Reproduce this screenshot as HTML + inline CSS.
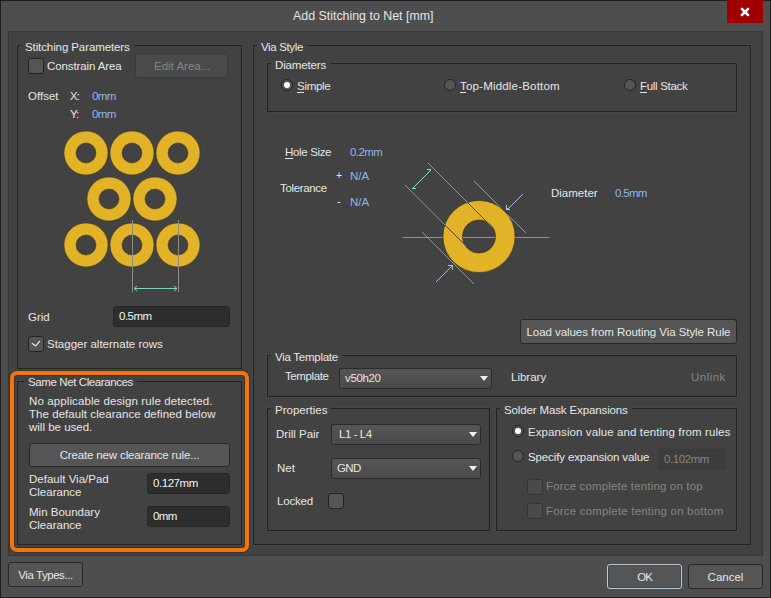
<!DOCTYPE html>
<html><head><meta charset="utf-8">
<style>
*{box-sizing:border-box;margin:0;padding:0}
html,body{width:771px;height:598px;overflow:hidden;background:#1e1e1e}
body{position:relative;font-family:"Liberation Sans",sans-serif;font-size:11.5px;color:#e6e6e6}
.win{position:absolute;left:0;top:0;width:771px;height:598px;background:#4e4e4e;border:1px solid #1e1e1e}
.panel{position:absolute;left:8px;top:31px;width:755px;height:525px;background:#424242;border:1px solid #363636}
.t{position:absolute;white-space:nowrap;line-height:14px;height:14px}
.v{color:#8db6e8}
.dis{color:#858585}
.grp{position:absolute;border:1px solid #222;box-shadow:0 0 0 1px rgba(255,255,255,0.03)}
.gt{position:absolute;white-space:nowrap;line-height:14px;height:14px;background:#424242;padding:0 4px}
.cb{position:absolute;width:16px;height:16px;border:1px solid #222;border-radius:3px;background:#555}
.cb.d{background:#4a4a4a;border-color:#353535}
.rd{position:absolute;width:12px;height:12px;border:1px solid #222;border-radius:50%;background:#555}
.rd.on::after{content:"";position:absolute;left:2px;top:2px;width:6px;height:6px;border-radius:50%;background:#fff}
.btn{position:absolute;border:1px solid #272727;border-radius:3px;background:#555;text-align:center}
.inp{position:absolute;border:1px solid #262626;border-radius:3px;background:#2e2e2e}
.inp.d{background:#3d3d3d;border-color:#3b3b3b}
.dd{position:absolute;border:1px solid #2a2a2a;border-radius:3px;background:linear-gradient(#565656,#4a4a4a)}
.arr{position:absolute;width:0;height:0;border-left:4px solid transparent;border-right:4px solid transparent;border-top:5px solid #f0f0f0}
u{text-decoration:none;border-bottom:1px solid #e6e6e6}
</style></head><body>
<div class="win"></div>
<!-- title -->
<div class="t" style="left:293px;top:9px;font-size:12.4px;color:#e4e4e4">Add Stitching to Net [mm]</div>
<div style="position:absolute;left:727px;top:0px;width:36px;height:23px;background:#a00000"></div>
<svg style="position:absolute;left:727px;top:1px" width="36" height="22" viewBox="0 0 36 22"><path d="M14.9 7.8 L21.1 14 M21.1 7.8 L14.9 14" stroke="#fff" stroke-width="2.5" stroke-linecap="round"/></svg>

<div class="panel"></div>

<!-- Stitching Parameters -->
<div class="grp" style="left:17px;top:45px;width:225px;height:324px"></div>
<div class="gt" style="left:21px;top:40px;letter-spacing:-0.1px">Stitching Parameters</div>
<div class="cb" style="left:28px;top:58px"></div>
<div class="t" style="left:47px;top:59px;letter-spacing:-0.11px">Constrain Area</div>
<div class="btn" style="left:135px;top:53px;width:93px;height:25px;background:#4a4a4a;border-color:#3a3a3a"></div>
<div class="t dis" style="left:154px;top:59px">Edit Area...</div>
<div class="t" style="left:28px;top:89px">Offset</div>
<div class="t" style="left:70px;top:89px;letter-spacing:-1px">X:</div>
<div class="t v" style="left:92px;top:89px;letter-spacing:-0.6px">0mm</div>
<div class="t" style="left:70px;top:107px;letter-spacing:-1px">Y:</div>
<div class="t v" style="left:92px;top:107px;letter-spacing:-0.6px">0mm</div>

<svg style="position:absolute;left:0;top:0" width="260" height="300">
 <g fill="none" stroke="#e2b227" stroke-width="12">
  <circle cx="86" cy="153" r="16"/><circle cx="132" cy="153" r="16"/><circle cx="178" cy="153" r="16"/>
  <circle cx="109" cy="199" r="16"/><circle cx="155" cy="199" r="16"/>
  <circle cx="86" cy="245" r="16"/><circle cx="132" cy="245" r="16"/><circle cx="178" cy="245" r="16"/>
</g>
 <g fill="none" stroke="#3a3020" stroke-opacity="0.5" stroke-width="1">
  <circle cx="86" cy="153" r="22"/><circle cx="132" cy="153" r="22"/><circle cx="178" cy="153" r="22"/>
  <circle cx="109" cy="199" r="22"/><circle cx="155" cy="199" r="22"/>
  <circle cx="86" cy="245" r="22"/><circle cx="132" cy="245" r="22"/><circle cx="178" cy="245" r="22"/>
  <circle cx="86" cy="153" r="10"/><circle cx="132" cy="153" r="10"/><circle cx="178" cy="153" r="10"/>
  <circle cx="109" cy="199" r="10"/><circle cx="155" cy="199" r="10"/>
  <circle cx="86" cy="245" r="10"/><circle cx="132" cy="245" r="10"/><circle cx="178" cy="245" r="10"/>
 </g>
 <g stroke="#8a8a8a" stroke-width="1"><line x1="132.5" y1="220" x2="132.5" y2="292"/><line x1="178.5" y1="220" x2="178.5" y2="292"/></g>
 <g stroke="#7fd4c8" stroke-width="1" fill="none"><line x1="134" y1="288.5" x2="177" y2="288.5"/><path d="M137 286 L134 288.5 L137 291 M174 286 L177 288.5 L174 291"/></g>
</svg>

<div class="t" style="left:28px;top:310px">Grid</div>
<div class="inp" style="left:113px;top:306px;width:117px;height:21px"></div>
<div class="t" style="left:119px;top:309px;letter-spacing:-0.5px;color:#f2f2f2">0.5mm</div>
<div class="cb" style="left:28px;top:336px"></div>
<svg style="position:absolute;left:28px;top:336px" width="16" height="16"><path d="M3.8 7.3 L7.8 9.9 L11.8 5" stroke="#dcdcdc" stroke-width="1.3" fill="none" stroke-linejoin="round"/></svg>
<div class="t" style="left:47px;top:337px">Stagger alternate rows</div>

<!-- Same Net Clearances -->
<div class="grp" style="left:17px;top:381px;width:225px;height:164px"></div>
<div class="gt" style="left:24px;top:375px;letter-spacing:-0.4px">Same Net Clearances</div>
<div class="t" style="left:29px;top:394px;letter-spacing:0.11px">No applicable design rule detected.</div>
<div class="t" style="left:29px;top:407px;letter-spacing:0.05px">The default clearance defined below</div>
<div class="t" style="left:29px;top:420px">will be used.</div>
<div class="btn" style="left:29px;top:443px;width:201px;height:24px"></div>
<div class="t" style="left:29px;top:448px;width:201px;text-align:center;letter-spacing:-0.15px">Create new clearance rule...</div>
<div class="t" style="left:29px;top:472px">Default Via/Pad</div>
<div class="t" style="left:29px;top:485px">Clearance</div>
<div class="inp" style="left:147px;top:473px;width:83px;height:21px"></div>
<div class="t" style="left:153px;top:476px;letter-spacing:-0.45px;color:#f2f2f2">0.127mm</div>
<div class="t" style="left:29px;top:505px">Min Boundary</div>
<div class="t" style="left:29px;top:518px">Clearance</div>
<div class="inp" style="left:147px;top:506px;width:83px;height:21px"></div>
<div class="t" style="left:153px;top:509px;letter-spacing:-0.6px;color:#f2f2f2">0mm</div>
<div style="position:absolute;left:10px;top:371px;width:239px;height:181px;border:4px solid #f4740c;border-radius:7px;box-shadow:0 0 0 1px rgba(70,35,5,0.55),inset 0 0 0 1px rgba(70,35,5,0.55)"></div>

<!-- Via Style -->
<div class="grp" style="left:253px;top:45px;width:498px;height:500px"></div>
<div class="gt" style="left:257px;top:40px;letter-spacing:-0.35px">Via Style</div>
<div class="grp" style="left:267px;top:63px;width:470px;height:49px"></div>
<div class="gt" style="left:271px;top:58px;letter-spacing:-0.14px">Diameters</div>
<div class="rd on" style="left:281px;top:79px"></div>
<div class="t" style="left:297px;top:79px;letter-spacing:-0.3px"><u>S</u>imple</div>
<div class="rd" style="left:444px;top:79px"></div>
<div class="t" style="left:460px;top:79px;letter-spacing:0.19px"><u>T</u>op-Middle-Bottom</div>
<div class="rd" style="left:624px;top:79px"></div>
<div class="t" style="left:640px;top:79px;letter-spacing:-0.31px"><u>F</u>ull Stack</div>

<div class="t" style="left:285px;top:145px;letter-spacing:-0.34px"><u>H</u>ole Size</div>
<div class="t v" style="left:350px;top:145px;letter-spacing:-0.57px">0.2mm</div>
<div class="t" style="left:336px;top:168px;font-size:10.5px">+</div>
<div class="t v" style="left:350px;top:169px">N/A</div>
<div class="t" style="left:280px;top:181px;letter-spacing:-0.34px">Tolerance</div>
<div class="t" style="left:337px;top:194px">-</div>
<div class="t v" style="left:350px;top:195px">N/A</div>
<div class="t" style="left:551px;top:186px">Diameter</div>
<div class="t v" style="left:615px;top:186px;letter-spacing:-0.7px">0.5mm</div>

<svg style="position:absolute;left:0;top:0" width="771" height="300" shape-rendering="crispEdges">
 <defs><mask id="rm" maskUnits="userSpaceOnUse" x="0" y="0" width="771" height="300"><circle cx="479" cy="236.5" r="36" fill="#fff"/><circle cx="479" cy="236.5" r="16.5" fill="#000"/></mask></defs>
 <rect x="403" y="237" width="146" height="1" fill="#909090"/>
 <path fill="#949494" d="M405 185h1v1h-1zM406 186h1v1h-1zM407 187h1v1h-1zM408 188h1v1h-1zM409 189h1v1h-1zM410 190h1v1h-1zM411 191h1v1h-1zM412 192h1v1h-1zM413 193h1v1h-1zM414 194h1v1h-1zM415 195h1v1h-1zM416 196h1v1h-1zM417 197h1v1h-1zM418 198h1v1h-1zM419 199h1v1h-1zM420 200h1v1h-1zM421 201h1v1h-1zM422 202h1v1h-1zM422 232h1v1h-1zM423 203h1v1h-1zM423 233h1v1h-1zM424 204h1v1h-1zM424 234h1v1h-1zM425 205h1v1h-1zM425 235h1v1h-1zM426 206h1v1h-1zM426 236h1v1h-1zM427 207h1v1h-1zM427 237h1v1h-1zM428 163h1v1h-1zM428 208h1v1h-1zM428 238h1v1h-1zM429 164h1v1h-1zM429 209h1v1h-1zM429 239h1v1h-1zM430 165h1v1h-1zM430 210h1v1h-1zM430 240h1v1h-1zM431 166h1v1h-1zM431 211h1v1h-1zM431 241h1v1h-1zM432 167h1v1h-1zM432 212h1v1h-1zM432 242h1v1h-1zM433 168h1v1h-1zM433 213h1v1h-1zM433 243h1v1h-1zM434 169h1v1h-1zM434 214h1v1h-1zM434 244h1v1h-1zM435 170h1v1h-1zM435 215h1v1h-1zM435 245h1v1h-1zM436 171h1v1h-1zM436 216h1v1h-1zM436 246h1v1h-1zM437 172h1v1h-1zM437 217h1v1h-1zM437 247h1v1h-1zM438 173h1v1h-1zM438 218h1v1h-1zM438 248h1v1h-1zM439 174h1v1h-1zM439 219h1v1h-1zM439 249h1v1h-1zM440 175h1v1h-1zM440 220h1v1h-1zM440 250h1v1h-1zM441 176h1v1h-1zM441 221h1v1h-1zM441 251h1v1h-1zM442 177h1v1h-1zM442 222h1v1h-1zM442 252h1v1h-1zM443 178h1v1h-1zM443 223h1v1h-1zM443 253h1v1h-1zM444 179h1v1h-1zM444 224h1v1h-1zM444 254h1v1h-1zM445 180h1v1h-1zM445 225h1v1h-1zM445 255h1v1h-1zM446 181h1v1h-1zM446 226h1v1h-1zM446 256h1v1h-1zM447 182h1v1h-1zM447 227h1v1h-1zM447 257h1v1h-1zM448 183h1v1h-1zM448 228h1v1h-1zM448 258h1v1h-1zM449 184h1v1h-1zM449 229h1v1h-1zM449 259h1v1h-1zM450 185h1v1h-1zM450 230h1v1h-1zM450 260h1v1h-1zM451 186h1v1h-1zM451 231h1v1h-1zM451 261h1v1h-1zM452 187h1v1h-1zM452 232h1v1h-1zM452 262h1v1h-1zM453 188h1v1h-1zM453 233h1v1h-1zM453 263h1v1h-1zM454 189h1v1h-1zM454 234h1v1h-1zM454 264h1v1h-1zM455 190h1v1h-1zM455 235h1v1h-1zM455 265h1v1h-1zM456 191h1v1h-1zM456 236h1v1h-1zM456 266h1v1h-1zM457 192h1v1h-1zM457 237h1v1h-1zM457 267h1v1h-1zM458 193h1v1h-1zM458 238h1v1h-1zM458 268h1v1h-1zM459 194h1v1h-1zM459 239h1v1h-1zM459 269h1v1h-1zM460 195h1v1h-1zM460 240h1v1h-1zM460 270h1v1h-1zM461 196h1v1h-1zM461 241h1v1h-1zM461 271h1v1h-1zM462 197h1v1h-1zM462 242h1v1h-1zM462 272h1v1h-1zM463 198h1v1h-1zM463 243h1v1h-1zM463 273h1v1h-1zM464 199h1v1h-1zM464 244h1v1h-1zM464 274h1v1h-1zM465 200h1v1h-1zM465 245h1v1h-1zM465 275h1v1h-1zM466 201h1v1h-1zM466 276h1v1h-1zM467 202h1v1h-1zM467 277h1v1h-1zM468 203h1v1h-1zM468 278h1v1h-1zM469 204h1v1h-1zM469 279h1v1h-1zM470 205h1v1h-1zM470 280h1v1h-1zM471 206h1v1h-1zM471 281h1v1h-1zM472 207h1v1h-1zM472 282h1v1h-1zM473 208h1v1h-1zM473 283h1v1h-1zM474 181h1v1h-1zM474 209h1v1h-1zM475 182h1v1h-1zM475 210h1v1h-1zM476 183h1v1h-1zM476 211h1v1h-1zM477 184h1v1h-1zM477 212h1v1h-1zM478 185h1v1h-1zM478 213h1v1h-1zM479 186h1v1h-1zM479 214h1v1h-1zM480 187h1v1h-1zM480 215h1v1h-1zM481 188h1v1h-1zM481 216h1v1h-1zM482 189h1v1h-1zM482 217h1v1h-1zM483 190h1v1h-1zM483 218h1v1h-1zM484 191h1v1h-1zM484 219h1v1h-1zM485 192h1v1h-1zM485 220h1v1h-1zM486 193h1v1h-1zM486 221h1v1h-1zM487 194h1v1h-1zM487 222h1v1h-1zM488 195h1v1h-1zM488 223h1v1h-1zM489 196h1v1h-1zM489 224h1v1h-1zM490 197h1v1h-1zM490 225h1v1h-1zM491 198h1v1h-1zM491 226h1v1h-1zM492 199h1v1h-1zM493 200h1v1h-1zM494 201h1v1h-1zM495 202h1v1h-1zM496 203h1v1h-1zM497 204h1v1h-1zM498 205h1v1h-1zM499 206h1v1h-1zM500 207h1v1h-1zM501 208h1v1h-1zM502 209h1v1h-1zM503 210h1v1h-1zM504 211h1v1h-1zM505 212h1v1h-1zM506 213h1v1h-1zM507 214h1v1h-1zM508 215h1v1h-1zM509 216h1v1h-1zM510 217h1v1h-1zM511 218h1v1h-1zM512 219h1v1h-1zM513 220h1v1h-1zM514 221h1v1h-1zM515 222h1v1h-1zM516 223h1v1h-1zM517 224h1v1h-1zM518 225h1v1h-1zM519 226h1v1h-1zM520 227h1v1h-1zM521 228h1v1h-1zM522 229h1v1h-1zM523 230h1v1h-1zM524 231h1v1h-1zM525 232h1v1h-1z"/>
 <circle cx="479" cy="236.5" r="26.25" fill="none" stroke="#e2b227" stroke-width="19.5" shape-rendering="geometricPrecision"/>
 <g fill="none" stroke="#3a3020" stroke-opacity="0.6" stroke-width="1" shape-rendering="geometricPrecision"><circle cx="479" cy="236.5" r="36"/><circle cx="479" cy="236.5" r="16.5"/></g>
 <path fill="#584a24" mask="url(#rm)" d="M405 185h1v1h-1zM406 186h1v1h-1zM407 187h1v1h-1zM408 188h1v1h-1zM409 189h1v1h-1zM410 190h1v1h-1zM411 191h1v1h-1zM412 192h1v1h-1zM413 193h1v1h-1zM414 194h1v1h-1zM415 195h1v1h-1zM416 196h1v1h-1zM417 197h1v1h-1zM418 198h1v1h-1zM419 199h1v1h-1zM420 200h1v1h-1zM421 201h1v1h-1zM422 202h1v1h-1zM422 232h1v1h-1zM423 203h1v1h-1zM423 233h1v1h-1zM424 204h1v1h-1zM424 234h1v1h-1zM425 205h1v1h-1zM425 235h1v1h-1zM426 206h1v1h-1zM426 236h1v1h-1zM427 207h1v1h-1zM427 237h1v1h-1zM428 163h1v1h-1zM428 208h1v1h-1zM428 238h1v1h-1zM429 164h1v1h-1zM429 209h1v1h-1zM429 239h1v1h-1zM430 165h1v1h-1zM430 210h1v1h-1zM430 240h1v1h-1zM431 166h1v1h-1zM431 211h1v1h-1zM431 241h1v1h-1zM432 167h1v1h-1zM432 212h1v1h-1zM432 242h1v1h-1zM433 168h1v1h-1zM433 213h1v1h-1zM433 243h1v1h-1zM434 169h1v1h-1zM434 214h1v1h-1zM434 244h1v1h-1zM435 170h1v1h-1zM435 215h1v1h-1zM435 245h1v1h-1zM436 171h1v1h-1zM436 216h1v1h-1zM436 246h1v1h-1zM437 172h1v1h-1zM437 217h1v1h-1zM437 247h1v1h-1zM438 173h1v1h-1zM438 218h1v1h-1zM438 248h1v1h-1zM439 174h1v1h-1zM439 219h1v1h-1zM439 249h1v1h-1zM440 175h1v1h-1zM440 220h1v1h-1zM440 250h1v1h-1zM441 176h1v1h-1zM441 221h1v1h-1zM441 251h1v1h-1zM442 177h1v1h-1zM442 222h1v1h-1zM442 252h1v1h-1zM443 178h1v1h-1zM443 223h1v1h-1zM443 253h1v1h-1zM444 179h1v1h-1zM444 224h1v1h-1zM444 254h1v1h-1zM445 180h1v1h-1zM445 225h1v1h-1zM445 255h1v1h-1zM446 181h1v1h-1zM446 226h1v1h-1zM446 256h1v1h-1zM447 182h1v1h-1zM447 227h1v1h-1zM447 257h1v1h-1zM448 183h1v1h-1zM448 228h1v1h-1zM448 258h1v1h-1zM449 184h1v1h-1zM449 229h1v1h-1zM449 259h1v1h-1zM450 185h1v1h-1zM450 230h1v1h-1zM450 260h1v1h-1zM451 186h1v1h-1zM451 231h1v1h-1zM451 261h1v1h-1zM452 187h1v1h-1zM452 232h1v1h-1zM452 262h1v1h-1zM453 188h1v1h-1zM453 233h1v1h-1zM453 263h1v1h-1zM454 189h1v1h-1zM454 234h1v1h-1zM454 264h1v1h-1zM455 190h1v1h-1zM455 235h1v1h-1zM455 265h1v1h-1zM456 191h1v1h-1zM456 236h1v1h-1zM456 266h1v1h-1zM457 192h1v1h-1zM457 237h1v1h-1zM457 267h1v1h-1zM458 193h1v1h-1zM458 238h1v1h-1zM458 268h1v1h-1zM459 194h1v1h-1zM459 239h1v1h-1zM459 269h1v1h-1zM460 195h1v1h-1zM460 240h1v1h-1zM460 270h1v1h-1zM461 196h1v1h-1zM461 241h1v1h-1zM461 271h1v1h-1zM462 197h1v1h-1zM462 242h1v1h-1zM462 272h1v1h-1zM463 198h1v1h-1zM463 243h1v1h-1zM463 273h1v1h-1zM464 199h1v1h-1zM464 244h1v1h-1zM464 274h1v1h-1zM465 200h1v1h-1zM465 245h1v1h-1zM465 275h1v1h-1zM466 201h1v1h-1zM466 276h1v1h-1zM467 202h1v1h-1zM467 277h1v1h-1zM468 203h1v1h-1zM468 278h1v1h-1zM469 204h1v1h-1zM469 279h1v1h-1zM470 205h1v1h-1zM470 280h1v1h-1zM471 206h1v1h-1zM471 281h1v1h-1zM472 207h1v1h-1zM472 282h1v1h-1zM473 208h1v1h-1zM473 283h1v1h-1zM474 181h1v1h-1zM474 209h1v1h-1zM475 182h1v1h-1zM475 210h1v1h-1zM476 183h1v1h-1zM476 211h1v1h-1zM477 184h1v1h-1zM477 212h1v1h-1zM478 185h1v1h-1zM478 213h1v1h-1zM479 186h1v1h-1zM479 214h1v1h-1zM480 187h1v1h-1zM480 215h1v1h-1zM481 188h1v1h-1zM481 216h1v1h-1zM482 189h1v1h-1zM482 217h1v1h-1zM483 190h1v1h-1zM483 218h1v1h-1zM484 191h1v1h-1zM484 219h1v1h-1zM485 192h1v1h-1zM485 220h1v1h-1zM486 193h1v1h-1zM486 221h1v1h-1zM487 194h1v1h-1zM487 222h1v1h-1zM488 195h1v1h-1zM488 223h1v1h-1zM489 196h1v1h-1zM489 224h1v1h-1zM490 197h1v1h-1zM490 225h1v1h-1zM491 198h1v1h-1zM491 226h1v1h-1zM492 199h1v1h-1zM493 200h1v1h-1zM494 201h1v1h-1zM495 202h1v1h-1zM496 203h1v1h-1zM497 204h1v1h-1zM498 205h1v1h-1zM499 206h1v1h-1zM500 207h1v1h-1zM501 208h1v1h-1zM502 209h1v1h-1zM503 210h1v1h-1zM504 211h1v1h-1zM505 212h1v1h-1zM506 213h1v1h-1zM507 214h1v1h-1zM508 215h1v1h-1zM509 216h1v1h-1zM510 217h1v1h-1zM511 218h1v1h-1zM512 219h1v1h-1zM513 220h1v1h-1zM514 221h1v1h-1zM515 222h1v1h-1zM516 223h1v1h-1zM517 224h1v1h-1zM518 225h1v1h-1zM519 226h1v1h-1zM520 227h1v1h-1zM521 228h1v1h-1zM522 229h1v1h-1zM523 230h1v1h-1zM524 231h1v1h-1zM525 232h1v1h-1z"/>
 <path fill="#98dccf" d="M412 188h1v1h-1zM413 187h1v1h-1zM413 188h1v1h-1zM414 186h1v1h-1zM414 188h1v1h-1zM415 185h1v1h-1zM415 188h1v1h-1zM416 184h1v1h-1zM417 183h1v1h-1zM418 182h1v1h-1zM419 181h1v1h-1zM420 180h1v1h-1zM421 179h1v1h-1zM422 178h1v1h-1zM423 177h1v1h-1zM424 176h1v1h-1zM425 175h1v1h-1zM426 174h1v1h-1zM427 169h1v1h-1zM427 173h1v1h-1zM428 169h1v1h-1zM428 172h1v1h-1zM429 169h1v1h-1zM429 171h1v1h-1zM430 169h1v1h-1zM430 170h1v1h-1z"/>
 <path fill="#b4b4f4" d="M436 281h1v1h-1zM437 280h1v1h-1zM438 279h1v1h-1zM439 278h1v1h-1zM440 277h1v1h-1zM441 276h1v1h-1zM442 275h1v1h-1zM443 274h1v1h-1zM444 273h1v1h-1zM445 272h1v1h-1zM446 271h1v1h-1zM447 270h1v1h-1zM448 265h1v1h-1zM448 269h1v1h-1zM449 265h1v1h-1zM449 268h1v1h-1zM450 265h1v1h-1zM450 267h1v1h-1zM451 265h1v1h-1zM451 266h1v1h-1zM452 265h1v1h-1zM452 266h1v1h-1zM452 267h1v1h-1zM452 268h1v1h-1zM452 269h1v1h-1zM506 205h1v1h-1zM506 206h1v1h-1zM506 207h1v1h-1zM506 208h1v1h-1zM506 209h1v1h-1zM507 208h1v1h-1zM507 209h1v1h-1zM508 208h1v1h-1zM508 209h1v1h-1zM509 207h1v1h-1zM509 209h1v1h-1zM510 206h1v1h-1zM511 205h1v1h-1zM512 204h1v1h-1zM513 203h1v1h-1zM514 202h1v1h-1zM515 201h1v1h-1zM516 200h1v1h-1zM517 199h1v1h-1zM518 198h1v1h-1zM519 197h1v1h-1zM520 196h1v1h-1zM521 195h1v1h-1zM522 194h1v1h-1z"/>
</svg>

<div class="btn" style="left:520px;top:319px;width:217px;height:25px"></div>
<div class="t" style="left:520px;top:325px;width:217px;text-align:center;letter-spacing:-0.06px">Load values from Routing Via Style Rule</div>

<!-- Via Template -->
<div class="grp" style="left:267px;top:355px;width:470px;height:42px"></div>
<div class="gt" style="left:271px;top:350px;letter-spacing:-0.26px">Via Template</div>
<div class="t" style="left:285px;top:369px;letter-spacing:-0.4px">Template</div>
<div class="dd" style="left:339px;top:368px;width:153px;height:21px"></div>
<div class="t" style="left:345px;top:371px;letter-spacing:-0.36px">v50h20</div>
<div class="arr" style="left:480px;top:376px"></div>
<div class="t" style="left:511px;top:370px">Library</div>
<div class="t dis" style="left:691px;top:370px;letter-spacing:0.48px">Unlink</div>

<!-- Properties -->
<div class="grp" style="left:267px;top:408px;width:223px;height:123px"></div>
<div class="gt" style="left:271px;top:403px">Properties</div>
<div class="t" style="left:276px;top:427px">Drill Pair</div>
<div class="dd" style="left:331px;top:424px;width:150px;height:21px"></div>
<div class="t" style="left:339px;top:427px;letter-spacing:-0.45px">L1 - L4</div>
<div class="arr" style="left:469px;top:432px"></div>
<div class="t" style="left:277px;top:461px">Net</div>
<div class="dd" style="left:331px;top:458px;width:150px;height:21px"></div>
<div class="t" style="left:337px;top:461px;letter-spacing:-0.6px">GND</div>
<div class="arr" style="left:469px;top:466px"></div>
<div class="t" style="left:277px;top:494px;letter-spacing:-0.2px">Locked</div>
<div class="cb" style="left:328px;top:493px"></div>

<!-- Solder Mask -->
<div class="grp" style="left:496px;top:408px;width:241px;height:123px"></div>
<div class="gt" style="left:500px;top:403px;letter-spacing:-0.13px">Solder Mask Expansions</div>
<div class="rd on" style="left:512px;top:425px"></div>
<div class="t" style="left:528px;top:425px;letter-spacing:0.095px">Expansion value and tenting from rules</div>
<div class="rd" style="left:512px;top:450px"></div>
<div class="t" style="left:528px;top:450px;letter-spacing:-0.12px">Specify expansion value</div>
<div class="inp d" style="left:658px;top:449px;width:67px;height:21px"></div>
<div class="t dis" style="left:664px;top:452px;letter-spacing:-0.42px">0.102mm</div>
<div class="cb d" style="left:527px;top:479px"></div>
<div class="t dis" style="left:546px;top:479px;letter-spacing:0.16px">Force complete tenting on top</div>
<div class="cb d" style="left:527px;top:503px"></div>
<div class="t dis" style="left:546px;top:504px;letter-spacing:0.19px">Force complete tenting on bottom</div>

<!-- bottom buttons -->
<div class="btn" style="left:8px;top:562px;width:75px;height:25px"></div>
<div class="t" style="left:8px;top:568px;width:75px;text-align:center;letter-spacing:-0.45px">Via Types...</div>
<div class="btn" style="left:607px;top:564px;width:75px;height:25px;border-color:#b6cadf;box-shadow:inset 0 0 0 1px #404a55"></div>
<div class="t" style="left:607px;top:570px;width:75px;text-align:center;letter-spacing:-1.0px">OK</div>
<div class="btn" style="left:688px;top:564px;width:75px;height:25px"></div>
<div class="t" style="left:688px;top:570px;width:75px;text-align:center">Cancel</div>
</body></html>
